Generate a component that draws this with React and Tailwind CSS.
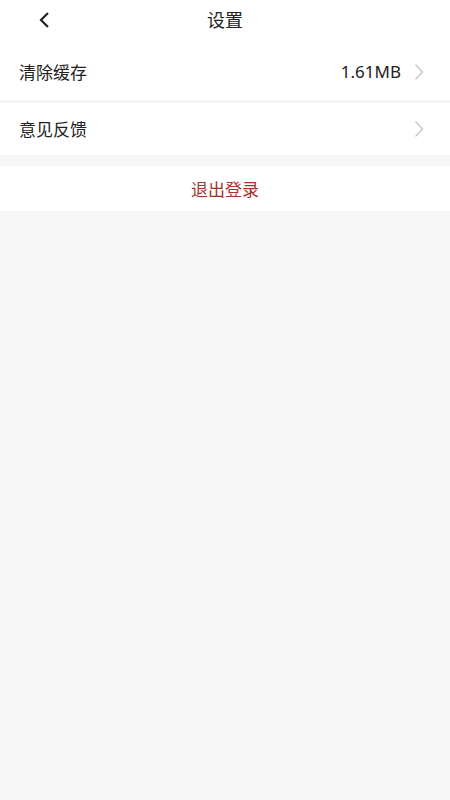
import React from "react";

const font = { fontFamily: '"Noto Sans CJK SC", "Noto Sans", sans-serif' };

const Chevron = () => (
  <svg width="10" height="18" viewBox="0 0 10 18" fill="none" className="ml-[13px]">
    <path d="M1.5 1.5l7 7.5-7 7.5" stroke="#c4c4c4" strokeWidth="1.3" />
  </svg>
);

const App = () => {
  return (
    <div className="min-h-[800px] w-full bg-[#f6f6f6]" style={font}>
      {/* Header */}
      <div className="relative flex h-[44px] items-center justify-center bg-white pb-[5px]">
        <button className="absolute left-[37px] top-[11px]">
          <svg width="16" height="18" viewBox="0 0 16 18" fill="none">
            <path d="M11 2L4 9l7 7" stroke="#222" strokeWidth="2.2" />
          </svg>
        </button>
        <h1 className="text-[18px] text-[#222]">设置</h1>
      </div>

      {/* Rows */}
      <div className="flex h-[56px] items-center justify-between bg-white pl-[19px] pr-[26px] text-[17px] text-[#222]">
        <span>清除缓存</span>
        <div className="flex items-center">
          <span className="text-[17px]" style={{ fontFamily: '"Noto Sans", sans-serif' }}>1.61MB</span>
          <Chevron />
        </div>
      </div>
      <div className="h-[3px] bg-[#f4f4f4]"></div>
      <div className="flex h-[52px] items-center justify-between bg-white pl-[19px] pr-[26px] text-[17px] text-[#222]">
        <span>意见反馈</span>
        <Chevron />
      </div>

      {/* Logout */}
      <div className="mt-[11px] flex h-[45px] items-center justify-center bg-white text-[17px] text-[#a7322f]">
        退出登录
      </div>
    </div>
  );
};

export default App;
